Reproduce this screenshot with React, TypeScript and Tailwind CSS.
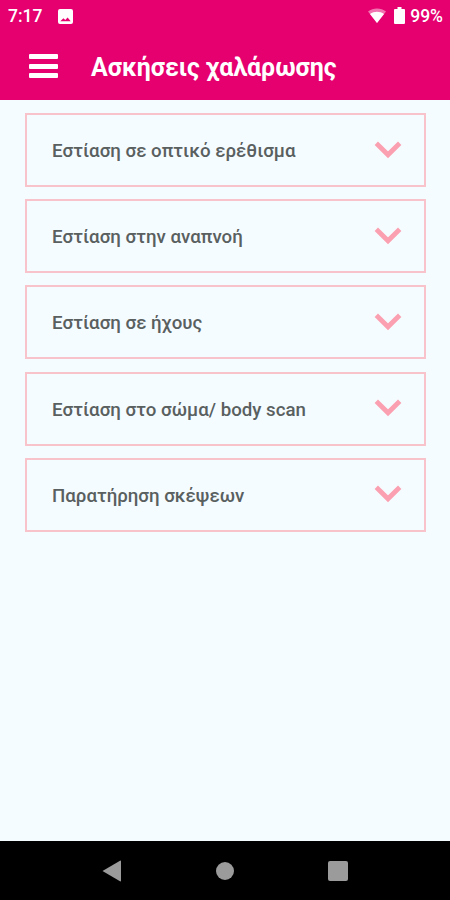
import React from 'react';

const exercises = [
  'Εστίαση σε οπτικό ερέθισμα',
  'Εστίαση στην αναπνοή',
  'Εστίαση σε ήχους',
  'Εστίαση στο σώμα/ body scan',
  'Παρατήρηση σκέψεων',
];

const StatusBar: React.FC = () => {
  return (
    <div className="flex h-8 items-center justify-between pl-2 pr-[7px] text-white">
      <div className="flex items-center">
        <span className="w-[49.5px] text-[17.5px] font-medium leading-8">7:17</span>
        <svg className="h-[15px] w-[15px]" viewBox="0 0 15 15" fill="currentColor">
          <path
            fillRule="evenodd"
            d="M2 0h11a2 2 0 0 1 2 2v11a2 2 0 0 1-2 2H2a2 2 0 0 1-2-2V2a2 2 0 0 1 2-2ZM2.3 12.2h10.4L9.6 8.6 7.3 11 5.4 9.3Z"
          />
        </svg>
      </div>
      <div className="flex items-center pb-[2px]">
        <svg className="h-[15px] w-[18px]" viewBox="0 0 18 15" fill="currentColor">
          <path d="M0 3.6C5 -.5 13 -.5 18 3.6L9 15Z" opacity=".45" />
          <path d="M2 6.1c4-3 10-3 14 0L9 15Z" />
        </svg>
        <svg className="ml-2 h-[17px] w-[11px]" viewBox="0 0 11 17" fill="currentColor">
          <path d="M3.5 0h4v2H10a1 1 0 0 1 1 1v13a1 1 0 0 1-1 1H1a1 1 0 0 1-1-1V3a1 1 0 0 1 1-1h2.5Z" />
        </svg>
        <span className="ml-[5px] pt-[2px] text-[17.5px] font-medium leading-8">99%</span>
      </div>
    </div>
  );
};

const Chevron: React.FC = () => {
  return (
    <svg className="mb-px h-[18px] w-7" viewBox="0 0 28 18" fill="none" stroke="#fba0b0" strokeWidth="4.8">
      <path d="M2.3 2.2 14 13.8 25.7 2.2" />
    </svg>
  );
};

export default function App() {
  return (
    <div className="flex h-[900px] w-[450px] flex-col overflow-hidden bg-[#f5fcff] font-[Roboto,sans-serif]">
      <header className="h-[100px] shrink-0 bg-[#e6006f] text-white">
        <StatusBar />
        <div className="flex h-[68px] items-center pl-[29px]">
          <button className="flex w-[62px] flex-col gap-[4.5px]" aria-label="Menu">
            <span className="h-[5px] w-[29px] rounded-[1px] bg-white" />
            <span className="h-[5px] w-[29px] rounded-[1px] bg-white" />
            <span className="h-[5px] w-[29px] rounded-[1px] bg-white" />
          </button>
          <h1 className="whitespace-nowrap pt-[3px] text-[24.9px] font-bold">Ασκήσεις χαλάρωσης</h1>
        </div>
      </header>

      <main className="flex flex-1 flex-col gap-[12.2px] px-[25px] pr-6 pt-[13px]">
        {exercises.map((title) => (
          <div
            key={title}
            className="flex h-[74px] items-center justify-between border-2 border-[#f8c3cb] pl-[25px] pr-[22px] text-[#59605f]"
          >
            <span className="whitespace-nowrap pt-[2px] text-[18.7px] font-medium">{title}</span>
            <Chevron />
          </div>
        ))}
      </main>

      <nav className="flex h-[59px] shrink-0 items-center bg-black pl-[102px] text-[#9b9b9b]">
        <svg className="h-[22px] w-[19px]" viewBox="0 0 19 22" fill="currentColor">
          <path d="M.5 11 18 .7q1-.5 1 .6v19.4q0 1.1-1 .6Z" />
        </svg>
        <span className="ml-[95px] h-[18px] w-[18px] rounded-full bg-current" />
        <span className="ml-[94px] h-5 w-5 rounded-[2px] bg-current" />
      </nav>
    </div>
  );
}
